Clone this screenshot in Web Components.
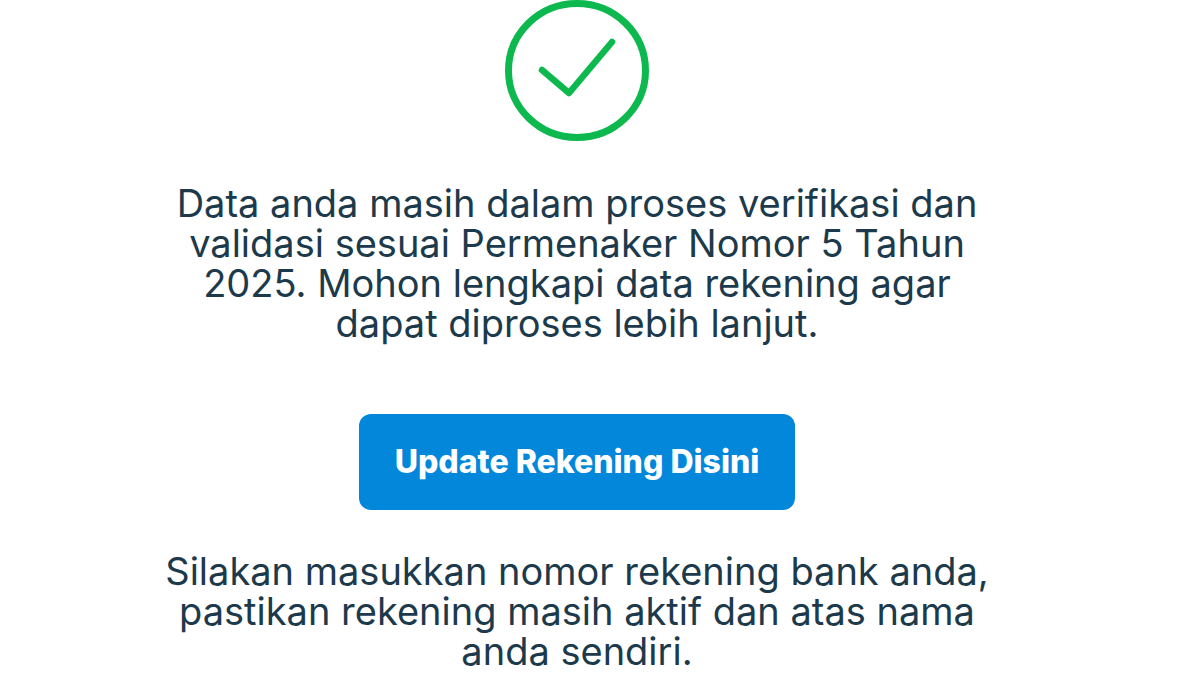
<!DOCTYPE html>
<html lang="id">
<head>
<meta charset="utf-8">
<meta name="viewport" content="width=device-width, initial-scale=1">
<title>Status Verifikasi</title>
<style>
body { margin: 0; background: #fff; color: #1c3a4b; font-family: Inter, sans-serif; }
</style>
</head>
<body>
<status-panel>
  <status-icon slot="icon"></status-icon>
  <status-message>Data anda masih dalam proses verifikasi dan validasi sesuai Permenaker Nomor 5 Tahun 2025. Mohon lengkapi data rekening agar dapat diproses lebih lanjut.</status-message>
  <action-button>Update Rekening Disini</action-button>
  <status-message>Silakan masukkan nomor rekening bank anda, pastikan rekening masih aktif dan atas nama anda sendiri.</status-message>
</status-panel>
<script>
const define = (name, html) => customElements.define(name, class extends HTMLElement {
  constructor() {
    super();
    const template = document.createElement('template');
    template.innerHTML = html;
    this.attachShadow({ mode: 'open' }).append(template.content.cloneNode(true));
  }
});

define('status-panel', `
  <style>
    :host { display: block; padding-right: 46px; }
    main { display: flex; flex-direction: column; align-items: center; }
    .body { display: flex; flex-direction: column; align-items: center; width: 100%; margin-top: 41px; }
    ::slotted(action-button) { margin: 71px 0 41px; }
  </style>
  <main>
    <slot name="icon"></slot>
    <div class="body"><slot></slot></div>
  </main>`);

define('status-icon', `
  <style>
    :host { display: block; }
    svg { display: block; }
  </style>
  <svg width="144" height="142" viewBox="0 0 144 142" fill="none" stroke="#0db94e" stroke-width="7" role="img" aria-label="Berhasil">
    <ellipse cx="72" cy="70.5" rx="68.5" ry="67"/>
    <path d="M37 70 64 93 107 42" stroke-width="6.5" stroke-linecap="round" stroke-linejoin="round"/>
  </svg>`);

define('status-message', `
  <style>
    :host { display: block; width: 100%; max-width: 840px; }
    p { margin: 0; font-size: 38px; line-height: 40px; font-weight: 400; text-align: center; }
  </style>
  <p><slot></slot></p>`);

define('action-button', `
  <style>
    :host { display: block; }
    button { display: block; border: 0; border-radius: 12px; padding: 28px 36px; background: #0287db; color: #fff;
      font: 800 32px/40px Inter, sans-serif; cursor: pointer; }
  </style>
  <button type="button"><slot></slot></button>`);
</script>
</body>
</html>
